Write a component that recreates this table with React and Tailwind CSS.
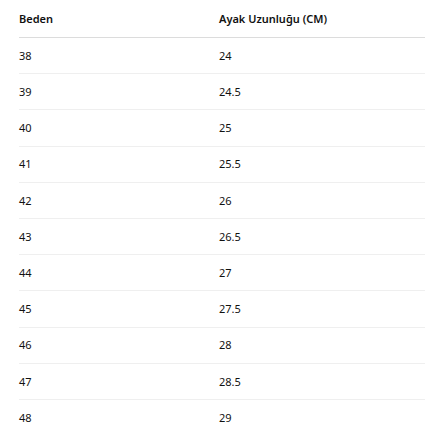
import React from "react";

const rows = [
  ["38", "24"],
  ["39", "24.5"],
  ["40", "25"],
  ["41", "25.5"],
  ["42", "26"],
  ["43", "26.5"],
  ["44", "27"],
  ["45", "27.5"],
  ["46", "28"],
  ["47", "28.5"],
  ["48", "29"],
];

export default function App() {
  return (
    <div className="w-[425px] h-[439px] overflow-hidden bg-white pl-[19px] text-[11px] text-[#111]" style={{ fontFamily: '"Noto Sans", "Open Sans", sans-serif' }}>
      <div className="w-[420px]">
        <div className="flex h-[38px] items-center border-b border-[#dcdcdc] pt-[2px] font-semibold">
          <div className="w-[200px]">Beden</div>
          <div>Ayak Uzunluğu (CM)</div>
        </div>
        {rows.map(([a, b], i) => (
          <div
            key={a}
            className={`flex h-[36.2px] items-center pt-[1px] ${i < rows.length - 1 ? "border-b border-[#efefef]" : ""}`}
          >
            <div className="w-[200px]">{a}</div>
            <div>{b}</div>
          </div>
        ))}
      </div>
    </div>
  );
}
